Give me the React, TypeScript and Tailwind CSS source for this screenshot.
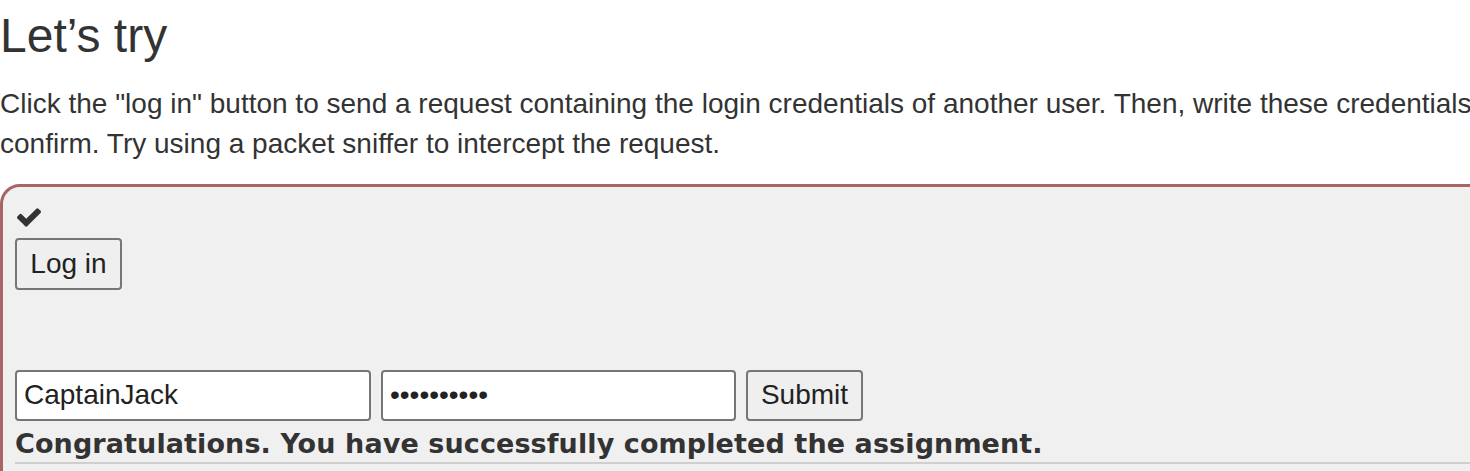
export default function App() {
  return (
    <div className="w-[1470px] h-[471px] overflow-hidden bg-white text-[#333] font-['Liberation_Sans',Arial,sans-serif]">
      <div className="w-[2100px]">
        {/* Title */}
        <h1 className="pt-[10px] text-[48px] leading-[52.8px] font-normal">Let’s try</h1>

        {/* Description */}
        <p className="mt-[21px] text-[28px] leading-[40px]">
          Click the "log in" button to send a request containing the login credentials of another user. Then, write these credentials into the appropriate fields and submit to
          <br />
          confirm. Try using a packet sniffer to intercept the request.
        </p>

        {/* Attack panel */}
        <div className="mt-[20px] border-[3px] border-[#a96464] rounded-[20px] bg-[#f0f0f0] px-[12px] pt-[20px] pb-[30px]">
          <svg viewBox="121 270 1550 1256" className="w-[24px] h-[20px] ml-[2px] fill-[#333]">
            <path d="M1671 566q0 40-28 68l-724 724-136 136q-28 28-68 28t-68-28l-136-136-362-362q-28-28-28-68t28-68l136-136q28-28 68-28t68 28l294 295 656-657q28-28 68-28t68 28l136 136q28 28 28 68z" />
          </svg>
          <button className="mt-[11px] block w-[107px] h-[52px] border-2 border-[#767676] rounded-[4px] bg-[#efefef] text-[28px] text-[#222]">
            Log in
          </button>

          <form className="mt-[80px] flex gap-[10px]" onSubmit={(e) => e.preventDefault()}>
            <input
              type="text"
              defaultValue="CaptainJack"
              className="w-[356px] h-[51px] px-[7px] border-2 border-[#767676] rounded-[4px] bg-white text-[28px] text-[#222] outline-none"
            />
            <input
              type="password"
              defaultValue="BlackPearl"
              className="w-[355px] h-[51px] px-[7px] border-2 border-[#767676] rounded-[4px] bg-white text-[28px] text-[#222] outline-none"
            />
            <button className="w-[117px] h-[51px] border-2 border-[#767676] rounded-[4px] bg-[#efefef] text-[28px] text-[#222]">
              Submit
            </button>
          </form>

          <div className="mt-[7px] text-[27px] leading-[32px] tracking-[0.1px] font-bold font-['DejaVu_Sans',sans-serif]">
            Congratulations. You have successfully completed the assignment.
          </div>
          <hr className="mt-[2px] border-t-2 border-[#cfcfcf]" />
        </div>
      </div>
    </div>
  )
}
